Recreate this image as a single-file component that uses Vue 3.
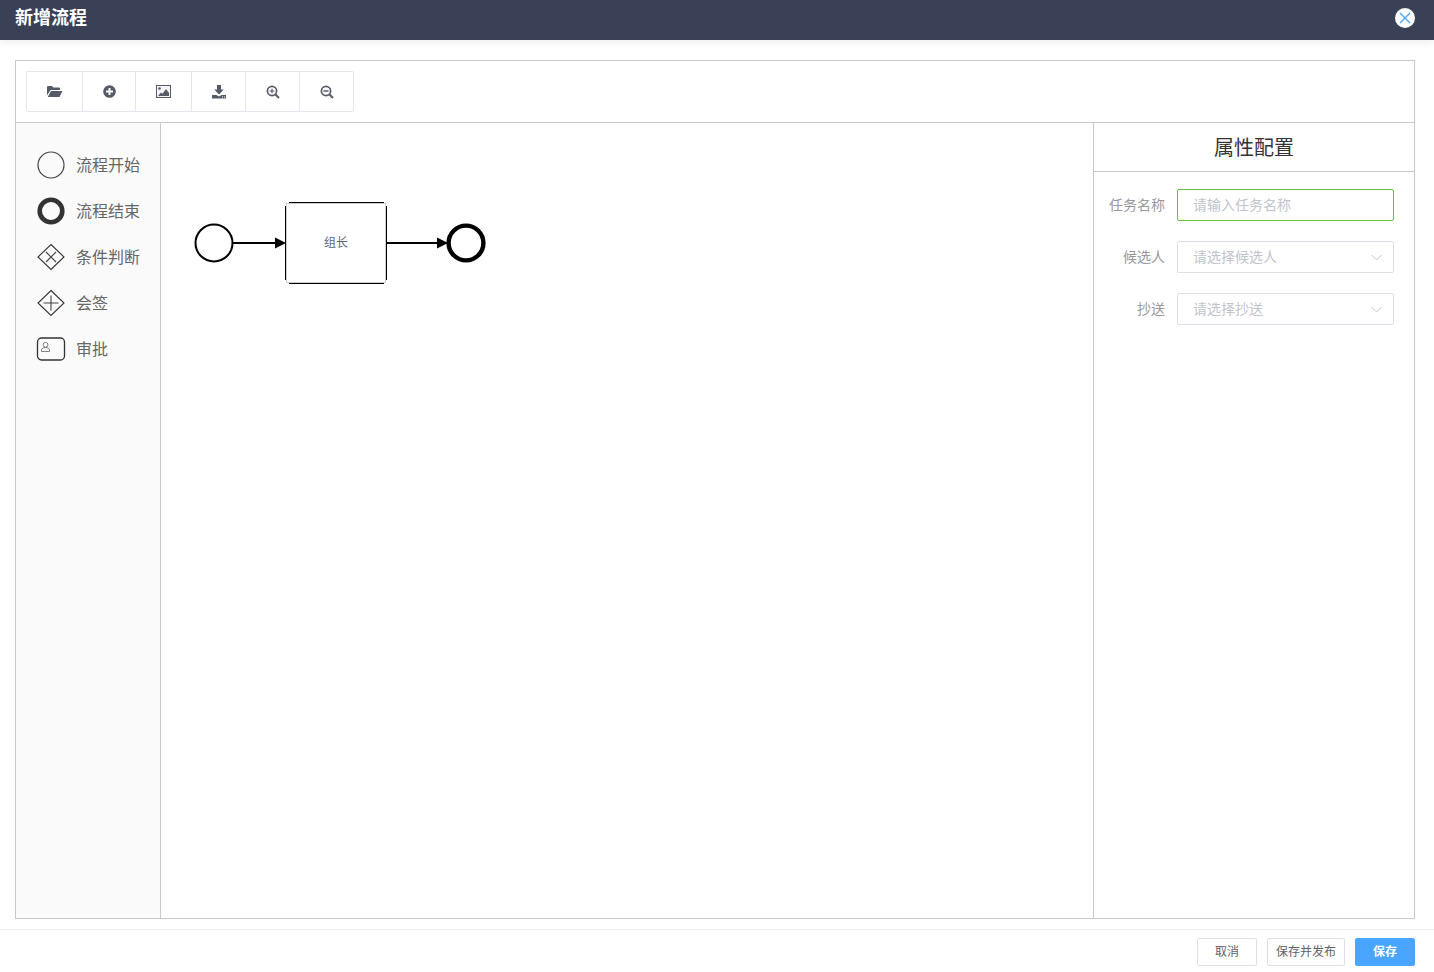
<script setup>
const fields = [
  { label: '任务名称', placeholder: '请输入任务名称', type: 'input' },
  { label: '候选人', placeholder: '请选择候选人', type: 'select' },
  { label: '抄送', placeholder: '请选择抄送', type: 'select' }
]
const palette = [
  { key: 'start', label: '流程开始' },
  { key: 'end', label: '流程结束' },
  { key: 'cond', label: '条件判断' },
  { key: 'sign', label: '会签' },
  { key: 'task', label: '审批' }
]
</script>

<template>
  <div class="page">
    <header class="topbar">
      <span class="title">新增流程</span>
      <button class="close" aria-label="关闭">
        <svg width="12" height="12" viewBox="0 0 12 12"><path d="M1 1l10 10M11 1L1 11" stroke="#49a5ff" stroke-width="1.4" fill="none"/></svg>
      </button>
    </header>

    <main class="content">
      <div class="designer">
        <div class="toolbar">
          <div class="btn-group">
            <div class="tool w56">
              <svg width="16" height="13" viewBox="0 0 16 13"><path d="M0 2a1 1 0 0 1 1-1h4l1.300 1.500H12a1 1 0 0 1 1 1V5H3.500L0 10.500z" fill="#555a66"/><path d="M4 6h11.500L12.500 12H.8z" fill="#555a66"/></svg>
            </div>
            <div class="tool w53">
              <svg width="13" height="13" viewBox="0 0 13 13"><circle cx="6.500" cy="6.500" r="6.300" fill="#555a66"/><path d="M6.500 3v7M3 6.500h7" stroke="#fff" stroke-width="2"/></svg>
            </div>
            <div class="tool w56">
              <svg width="15" height="13" viewBox="0 0 15 13"><rect x=".5" y=".5" width="14" height="12" fill="#f4f4f5" stroke="#555a66"/><circle cx="3.500" cy="3.500" r="1.300" fill="#555a66"/><path d="M2 11l3-3.500 1.500 1.200L10 4l3 4v3z" fill="#555a66"/></svg>
            </div>
            <div class="tool w54">
              <svg width="14" height="14" viewBox="0 0 14 14"><path d="M5 0h4v4.500h2.800L7 9.500 2.200 4.500H5z" fill="#555a66"/><path d="M0 10h4.500L7 11.500 9.500 10H14v3.500H0z" fill="#555a66"/><path d="M10 12h1M12 12h1" stroke="#fff"/></svg>
            </div>
            <div class="tool w54">
              <svg width="14" height="14" viewBox="0 0 14 14"><circle cx="6" cy="6" r="4.600" fill="none" stroke="#555a66" stroke-width="1.700"/><path d="M9.500 9.500L13 13" stroke="#555a66" stroke-width="2"/><path d="M6 3.700v4.600M3.700 6h4.600" stroke="#555a66" stroke-width="1.200"/></svg>
            </div>
            <div class="tool w53">
              <svg width="14" height="14" viewBox="0 0 14 14"><circle cx="6" cy="6" r="4.600" fill="none" stroke="#555a66" stroke-width="1.700"/><path d="M9.500 9.500L13 13" stroke="#555a66" stroke-width="2"/><path d="M3.500 6h5" stroke="#555a66" stroke-width="1.500"/></svg>
            </div>
          </div>
        </div>

        <div class="workspace">
          <aside class="palette">
            <div v-for="item in palette" :key="item.key" class="palette-item">
              <svg class="palette-icon" width="30" height="28" viewBox="0 0 30 28">
                <circle v-if="item.key === 'start'" cx="15" cy="14" r="13" fill="none" stroke="#444" stroke-width="1.200"/>
                <circle v-if="item.key === 'end'" cx="15" cy="14" r="11.300" fill="none" stroke="#333" stroke-width="4.600"/>
                <template v-if="item.key === 'cond'">
                  <path d="M15 1.500L28 14 15 26.500 2 14z" fill="none" stroke="#333" stroke-width="1.100"/>
                  <path d="M10 9l10 10M20 9L10 19" stroke="#444" stroke-width="1.100"/>
                </template>
                <template v-if="item.key === 'sign'">
                  <path d="M15 1.500L28 14 15 26.500 2 14z" fill="none" stroke="#333" stroke-width="1.100"/>
                  <path d="M15 6.500v15M7.500 14h15" stroke="#444" stroke-width="1.100"/>
                </template>
                <template v-if="item.key === 'task'">
                  <rect x="1.500" y="3" width="27" height="22" rx="4" fill="none" stroke="#333" stroke-width="1.300"/>
                  <circle cx="9.500" cy="9.800" r="2.400" fill="none" stroke="#666" stroke-width=".8"/>
                  <path d="M5.500 16.500v-2.300l2.500-1.700h3l2.500 1.700v2.300z" fill="none" stroke="#666" stroke-width=".8"/>
                </template>
              </svg>
              <span>{{ item.label }}</span>
            </div>
          </aside>

          <section class="canvas">
            <svg class="flow" width="340" height="110" viewBox="0 0 340 110">
              <circle cx="53" cy="50" r="18.500" fill="#fff" stroke="#000" stroke-width="2"/>
              <path d="M72 50h42" stroke="#000" stroke-width="2"/>
              <path d="M114 44.500l11 5.500-11 5.500z" fill="#000"/>
              <path d="M128 9.500h95M128 90.500h95M124.500 13v74M225.500 13v74" stroke="#000" fill="none"/>
              <rect x="125.500" y="10.500" width="99" height="79" fill="#fff" stroke="#ccc"/>
              <path d="M226 50h50" stroke="#000" stroke-width="2"/>
              <path d="M276 44.500l11 5.500-11 5.500z" fill="#000"/>
              <circle cx="305" cy="50" r="17.400" fill="#fff" stroke="#000" stroke-width="4.400"/>
            </svg>
            <span class="node-label">组长</span>
          </section>

          <aside class="props">
            <h2 class="props-title">属性配置</h2>
            <form class="form">
              <div v-for="(f, i) in fields" :key="f.label" class="form-row">
                <label>{{ f.label }}</label>
                <div class="control" :class="{ focused: i === 0 }">
                  <span class="placeholder">{{ f.placeholder }}</span>
                  <svg v-if="f.type === 'select'" width="11" height="7" viewBox="0 0 11 7"><path d="M.5 1l5 5 5-5" fill="none" stroke="#c0c4cc"/></svg>
                </div>
              </div>
            </form>
          </aside>
        </div>
      </div>
    </main>

    <footer class="footer">
      <button class="btn w60">取消</button>
      <button class="btn w78">保存并发布</button>
      <button class="btn w60 primary">保存</button>
    </footer>
  </div>
</template>

<style>
html, body { margin: 0; background: #fff; }
</style>

<style scoped>
.page {
  width: 1434px;
  height: 972px;
  display: flex;
  flex-direction: column;
  overflow: hidden;
  background: #fff;
  font-family: "Noto Sans CJK SC", "Liberation Sans", sans-serif;
}
.topbar {
  height: 40px;
  flex: none;
  box-sizing: border-box;
  background: #3a4056;
  display: flex;
  align-items: center;
  justify-content: space-between;
  padding: 0 19px 0 15px;
  box-shadow: 0 2px 8px rgba(0, 0, 0, 0.08);
  position: relative;
}
.title {
  color: #fff;
  font-size: 18px;
  font-weight: 700;
  line-height: 34px;
  margin-bottom: 8px;
}
.close {
  width: 20px;
  height: 20px;
  border: 0;
  padding: 0;
  border-radius: 50%;
  background: #fff;
  display: flex;
  align-items: center;
  justify-content: center;
  margin-bottom: 4px;
}
.content {
  flex: none;
  height: 889px;
  box-sizing: border-box;
  padding: 20px 19px 10px 15px;
}
.designer {
  height: 100%;
  box-sizing: border-box;
  border: 1px solid #c9c9c9;
  display: flex;
  flex-direction: column;
}
.toolbar {
  height: 62px;
  flex: none;
  box-sizing: border-box;
  border-bottom: 1px solid #c9c9c9;
  padding: 10px;
}
.btn-group {
  display: inline-flex;
  height: 41px;
  box-sizing: border-box;
  border: 1px solid #e4e7ed;
  border-radius: 2px;
}
.tool {
  height: 100%;
  box-sizing: border-box;
  display: flex;
  align-items: center;
  justify-content: center;
  border-right: 1px solid #e4e7ed;
}
.tool:last-child { border-right: 0; }
.w56 { width: 56px; }
.w53 { width: 53px; }
.w54 { width: 54px; }
.workspace {
  flex: 1;
  display: flex;
  min-height: 0;
}
.palette {
  width: 145px;
  flex: none;
  box-sizing: border-box;
  background: #fafafa;
  border-right: 1px solid #c9c9c9;
  padding-top: 19px;
}
.palette-item {
  height: 46px;
  display: flex;
  align-items: center;
  padding-left: 20px;
  color: #666;
  font-size: 16px;
  box-sizing: border-box;
}
.palette-item span { margin-left: 10px; margin-bottom: 2px; }
.palette-icon { flex: none; }
.canvas {
  flex: 1;
  position: relative;
  background: #fff;
}
.flow {
  position: absolute;
  left: 0;
  top: 70px;
}
.node-label {
  position: absolute;
  left: 163px;
  top: 110px;
  font-size: 12px;
  line-height: 18px;
  color: #5a6485;
}
.props {
  width: 321px;
  flex: none;
  box-sizing: border-box;
  border-left: 1px solid #c9c9c9;
}
.props-title {
  margin: 0;
  height: 49px;
  box-sizing: border-box;
  border-bottom: 1px solid #c9c9c9;
  font-size: 20px;
  font-weight: 400;
  line-height: 48px;
  text-align: center;
  color: #333;
}
.form {
  padding: 17px 20px 0 0;
  display: flex;
  flex-direction: column;
  gap: 20px;
}
.form-row {
  display: flex;
  align-items: center;
  height: 32px;
}
.form-row label {
  width: 71px;
  flex: none;
  text-align: right;
  font-size: 14px;
  color: #999;
  margin-bottom: 2px;
}
.control {
  margin-left: 12px;
  flex: 1;
  height: 32px;
  box-sizing: border-box;
  border: 1px solid #dcdfe6;
  border-radius: 2px;
  display: flex;
  align-items: center;
  justify-content: space-between;
  padding: 0 11px 0 15px;
  background: #fff;
}
.control.focused { border-color: #67c23a; }
.placeholder {
  font-size: 14px;
  color: #c0c4cc;
  margin-bottom: 2px;
}
.footer {
  flex: 1;
  box-sizing: border-box;
  border-top: 1px solid #eee;
  display: flex;
  justify-content: flex-end;
  gap: 10px;
  padding: 8px 19px 0 0;
}
.btn {
  height: 28px;
  padding: 0 0 4px;
  box-sizing: border-box;
  border: 1px solid #dcdfe6;
  border-radius: 2px;
  background: #fff;
  color: #606266;
  font-size: 12px;
  font-family: inherit;
}
.w60 { width: 60px; }
.w78 { width: 78px; }
.primary {
  background: #49a5ff;
  border-color: #49a5ff;
  color: #fff;
  font-weight: 700;
}
</style>
